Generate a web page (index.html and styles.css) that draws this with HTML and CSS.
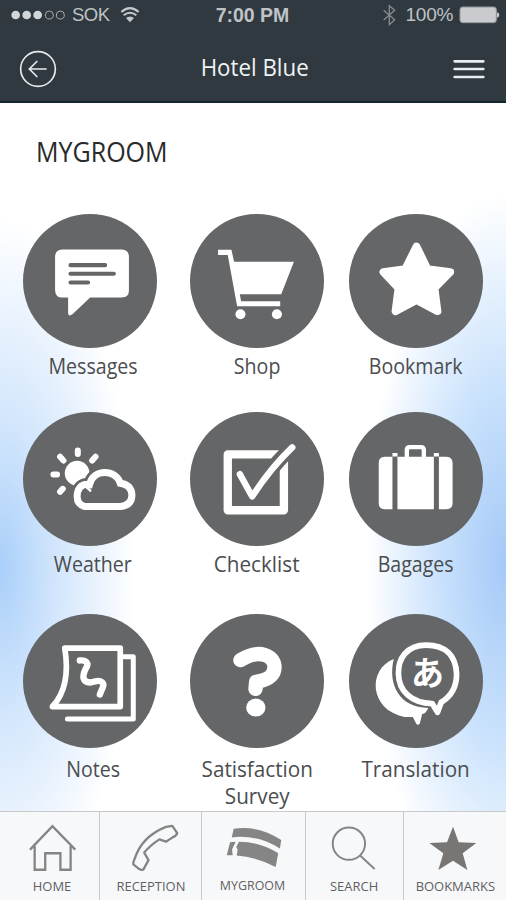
FILE: index.html
```
<!DOCTYPE html>
<html lang="en">
<head>
    <meta charset="UTF-8">
    <meta name="viewport" content="width=device-width, initial-scale=1.0">
    <title>Hotel Blue</title>
    <link rel="stylesheet" href="styles.css">
</head>
<body>
    <header>
        <div class="status-bar">
            <div class="status-left">
                <svg width="55" height="14" viewBox="33 23 165 42">
                    <g fill="#d3d6d8"><circle cx="47" cy="44" r="13"/><circle cx="80" cy="44" r="13"/><circle cx="113" cy="44" r="13"/></g>
                    <g fill="none" stroke="#a5abae" stroke-width="3"><circle cx="148" cy="44" r="12"/><circle cx="181" cy="44" r="12"/></g>
                </svg>
                <span class="carrier">SOK</span>
                <svg width="20" height="16" viewBox="358 18 60 48">
                    <g fill="none" stroke="#c5c9cb" stroke-width="6"><path d="M362 33Q388 10 414 33M369 43Q388 27 407 43"/></g>
                    <path d="M376 51Q388 42 400 51L388 64Z" fill="#c5c9cb"/>
                </svg>
            </div>
            <div class="clock">7:00 PM</div>
            <div class="status-right">
                <svg width="14" height="22" viewBox="1148 10 42 66">
                    <path d="M1153 29L1186 57L1170 72V15L1186 29L1153 58" fill="none" stroke="#858c91" stroke-width="4"/>
                </svg>
                <span class="percent">100%</span>
                <svg width="41" height="18" viewBox="1377 17 123 54">
                    <rect x="1380" y="20" width="109" height="47" rx="8" fill="#c9cbce" stroke="#92989c" stroke-width="3"/>
                    <path d="M1491 36Q1498 38 1498 44Q1498 50 1491 52Z" fill="#c9cbce"/>
                </svg>
            </div>
        </div>
        <div class="nav-bar">
            <svg width="38" height="38" viewBox="56 149 114 114" fill="none" stroke="#e4eaed" stroke-width="5">
                <circle cx="113" cy="206" r="52"/>
                <path d="M139 206H88M111 182L87 206L111 230"/>
            </svg>
            <h1>Hotel Blue</h1>
            <svg width="32" height="22" viewBox="1360 171 96 66" stroke="#e9eef0" stroke-width="8" stroke-linecap="round">
                <path d="M1365 181H1451M1365 204H1451M1365 228H1451"/>
            </svg>
        </div>
    </header>

    <main>
        <h2>MYGROOM</h2>
        <div class="grid">
            <div class="item">
                <svg class="icon" viewBox="40 28 401 401">
                    <path d="M158 134H335Q357 134 357 156V257Q357 278 335 278H241L188 328Q175 337 175 322V278H158Q136 278 136 256V156Q136 134 158 134Z" fill="#fff"/>
                    <path d="M182 181H286M182 207H312M182 233H235" stroke="#646667" stroke-width="12" stroke-linecap="round"/>
                </svg>
                <span class="label">Messages</span>
            </div>
            <div class="item">
                <svg class="icon" viewBox="31 28 401 401" fill="#fff">
                    <path d="M115 135H155L163 171H342L304 268H180L184 289H301V304H172L144 151H115Z"/>
                    <circle cx="182" cy="328" r="15"/><circle cx="291" cy="328" r="15"/>
                </svg>
                <span class="label">Shop</span>
            </div>
            <div class="item">
                <svg class="icon" viewBox="28 28 401 401">
                    <path d="M230 125L263 193L331 202L284 250L293 319L230 286L167 319L176 250L131 202L196 193Z" fill="#fff" stroke="#fff" stroke-width="23" stroke-linejoin="round"/>
                </svg>
                <span class="label">Bookmark</span>
            </div>
            <div class="item">
                <svg class="icon" viewBox="40 37 401 401">
                    <circle cx="202" cy="220" r="37" fill="#fff"/>
                    <path d="M204 152V163M151 171L161 182M131 224H142M151 276L159 267M257 171L247 182" stroke="#fff" stroke-width="18" stroke-linecap="round"/>
                    <path d="M226 320H333Q366 316 366 285Q364 254 331 250C318 208 251 205 239 254C211 250 202 271 202 290Q202 315 226 320Z" fill="#646667" stroke="#646667" stroke-width="38"/>
                    <path d="M226 320H333Q366 316 366 285Q364 254 331 250C318 208 251 205 239 254C211 250 202 271 202 290Q202 315 226 320Z" fill="none" stroke="#fff" stroke-width="21"/>
                    <path d="M232 264Q238 267 241 272" fill="none" stroke="#fff" stroke-width="8" stroke-linecap="round"/>
                </svg>
                <span class="label">Weather</span>
            </div>
            <div class="item">
                <svg class="icon" viewBox="31 37 401 401" fill="none">
                    <path d="M312 180V331H144V164H310" stroke="#fff" stroke-width="25" stroke-linejoin="round"/>
                    <path d="M262 226Q295 180 337 143" stroke="#646667" stroke-width="43"/>
                    <path d="M180 223L217 290Q272 205 337 143" stroke="#fff" stroke-width="19" stroke-linecap="round" stroke-linejoin="round"/>
                </svg>
                <span class="label wide">Checklist</span>
            </div>
            <div class="item">
                <svg class="icon" viewBox="28 37 401 401" fill="#fff">
                    <path d="M153 171H134Q117 172 117 189V310Q117 327 134 328H158V171ZM173 171H282V328H173ZM297 171H320Q338 172 338 190V310Q338 327 320 328H297Z"/>
                    <path d="M158 160H173V170H158ZM282 160H297V170H282Z"/>
                    <path d="M201 172V151Q201 142 210 142H243Q252 142 252 151V172" fill="none" stroke="#fff" stroke-width="13"/>
                </svg>
                <span class="label">Bagages</span>
            </div>
            <div class="item">
                <svg class="icon" viewBox="40 42 401 401" fill="none" stroke="#fff" stroke-width="17" stroke-linecap="round" stroke-linejoin="round">
                    <path d="M165 144H331V319H128Q184 260 165 144Z"/>
                    <path d="M342 170H370V356H173" stroke-width="15"/>
                    <path d="M210 181C229 179 239 190 228 205C216 229 218 246 241 247C254 247 264 237 275 245C288 253 275 266 270 283" stroke-width="19"/>
                </svg>
                <span class="label">Notes</span>
            </div>
            <div class="item">
                <svg class="icon" viewBox="31 42 401 401">
                    <path d="M182 180C238 145 283 166 284 200C284 227 266 239 229 245L227 266" fill="none" stroke="#fff" stroke-width="43" stroke-linecap="round" stroke-linejoin="round"/>
                    <ellipse cx="228" cy="322" rx="29" ry="27" fill="#fff"/>
                </svg>
                <span class="label wide">Satisfaction<br>Survey</span>
            </div>
            <div class="item">
                <div class="translate">
                    <svg class="icon" viewBox="28 42 401 401">
                        <path d="M162 177C82 208 89 330 194 350H219L229 370Q234 377 240 370L247 341Q259 339 265 323C180 323 143 254 162 177Z" fill="#fff"/>
                        <path d="M259 135C199 135 175 177 176 220C176 272 215 309 277 310L293 336L304 306C335 287 350 262 350 222C348 166 317 135 259 135Z" fill="none" stroke="#fff" stroke-width="17" stroke-linejoin="round"/>
                    </svg>
                    <span class="kana">あ</span>
                </div>
                <span class="label wide">Translation</span>
            </div>
        </div>
    </main>

    <footer>
        <div class="tab home">
            <svg viewBox="0 36 300 186" fill="none" stroke="#858585" stroke-width="7">
                <path d="M91 149L159 78L228 149M105 138V210H137V160H183V210H214V138"/>
            </svg>
            <span>HOME</span>
        </div>
        <div class="tab">
            <svg viewBox="300 36 306 186" fill="none" stroke="#858585" stroke-width="7" stroke-linejoin="round">
                <path d="M500 80L519 77L534 99Q532 107 520 112L500 125L480 118Q452 136 434 158L447 181L432 208Q427 213 419 208L401 194Q400 187 405 177C419 133 449 100 500 80Z"/>
            </svg>
            <span>RECEPTION</span>
        </div>
        <div class="tab mygroom">
            <svg viewBox="606 36 312 186" fill="#858585">
                <path d="M702 86Q778 75 846 120L842 146Q775 103 696 112ZM691 127L708 125L697 149L699 166H681ZM718 125Q782 125 837 160L829 202Q775 172 711 167L714 150L710 140Z"/>
            </svg>
            <span>MYGROOM</span>
        </div>
        <div class="tab">
            <svg viewBox="918 36 294 186" fill="none" stroke="#858585" stroke-width="6">
                <circle cx="1048" cy="131" r="49"/>
                <path d="M1082 167L1126 208"/>
            </svg>
            <span>SEARCH</span>
        </div>
        <div class="tab">
            <svg viewBox="1212 36 306 186" fill="#777675">
                <path d="M1359 80L1376 127L1429 129L1388 160L1402 210L1359 182L1315 210L1330 160L1288 129L1341 127Z"/>
            </svg>
            <span>BOOKMARKS</span>
        </div>
    </footer>
</body>
</html>
```

FILE: styles.css
```
* {
    box-sizing: border-box;
}
body {
    margin: 0;
    width: 506px;
    height: 900px;
    overflow: hidden;
    display: flex;
    flex-direction: column;
    font-family: 'Open Sans', 'Noto Sans', sans-serif;
    color: #4b4d4f;
    background-color: #fff;
}
svg {
    display: block;
    flex: none;
}
header {
    height: 103px;
    background-color: #303940;
    border-bottom: 2px solid #12262d;
    color: #f0f3f4;
}
.status-bar {
    height: 30px;
    padding: 0 6px 0 11px;
    display: grid;
    grid-template-columns: 1fr 80px 1fr;
    align-items: center;
    font-family: 'Liberation Sans', Arial, sans-serif;
    font-size: 19px;
    color: #bfc3c6;
}
.status-left,
.status-right {
    display: flex;
    align-items: center;
}
.carrier {
    margin: 0 10px 0 6px;
    font-size: 18.5px;
    letter-spacing: -0.5px;
}
.clock {
    font-weight: bold;
    font-size: 19.5px;
    text-align: center;
    white-space: nowrap;
    margin-left: -6px;
}
.status-right {
    justify-content: flex-end;
}
.percent {
    margin: 0 6px 0 10px;
    letter-spacing: -0.3px;
}
.nav-bar {
    height: 78px;
    padding: 0 21px 0 19px;
    display: flex;
    align-items: center;
    justify-content: space-between;
}
h1 {
    margin: 0 0 4px;
    font-size: 23px;
    line-height: 30px;
    font-weight: 400;
    transform: scaleX(0.97);
}
main {
    height: 708px;
    background:
        radial-gradient(ellipse 135px 350px at 0 465px, #a9cff9 0%, rgba(184,215,251,0.65) 40%, rgba(255,255,255,0) 100%),
        radial-gradient(ellipse 140px 370px at 506px 460px, #a5c9f7 0%, rgba(180,214,251,0.75) 45%, rgba(255,255,255,0) 100%),
        #fff;
}
h2 {
    margin: 0;
    padding: 31px 0 0 36px;
    height: 111px;
    font-size: 27.5px;
    line-height: 36px;
    font-weight: 400;
    color: #292a2b;
    transform: scaleX(0.91);
    transform-origin: 36px 0;
}
.grid {
    display: grid;
    grid-template-columns: 134px 134px 134px;
    grid-template-rows: 198px 202px 197px;
    column-gap: 33px;
    padding-left: 23px;
}
.item {
    display: flex;
    flex-direction: column;
    align-items: center;
}
.item:nth-child(3n) {
    margin-left: -8px;
    margin-right: 8px;
}
.icon {
    width: 134px;
    height: 134px;
    border-radius: 50%;
    background-color: #646667;
}
.label {
    font-size: 22px;
    line-height: 27px;
    margin-top: 4px;
    text-align: center;
    white-space: nowrap;
    transform: scaleX(0.89);
}
.label.wide {
    transform: scaleX(0.94);
}
.item:nth-child(3n+1) .label {
    margin-left: 6px;
}
.item:nth-child(n+7) .label {
    margin-top: 7px;
}
.translate {
    position: relative;
}
.kana {
    position: absolute;
    left: 62px;
    top: 37px;
    font-family: 'Noto Sans CJK JP', sans-serif;
    font-size: 33px;
    line-height: 40px;
    font-weight: 700;
    color: #fff;
}
footer {
    height: 89px;
    display: grid;
    grid-template-columns: 100px 102px 104px 98px 102px;
    background-color: #f7f8fa;
    border-top: 1px solid #c9c9cb;
}
.tab {
    display: flex;
    flex-direction: column;
    align-items: center;
    border-right: 1px solid #c9c9cb;
    font-size: 13.5px;
    line-height: 18px;
    color: #5f6061;
}
.tab:last-child {
    border-right: none;
}
.tab svg {
    width: 100%;
    height: 62px;
}
.tab span {
    margin-top: 3px;
    white-space: nowrap;
    transform: scaleX(0.96);
}
.tab.home span {
    margin-left: 6px;
}
.tab.mygroom span {
    margin-top: 2px;
    margin-right: 3px;
    transform: scaleX(0.92);
}
```
